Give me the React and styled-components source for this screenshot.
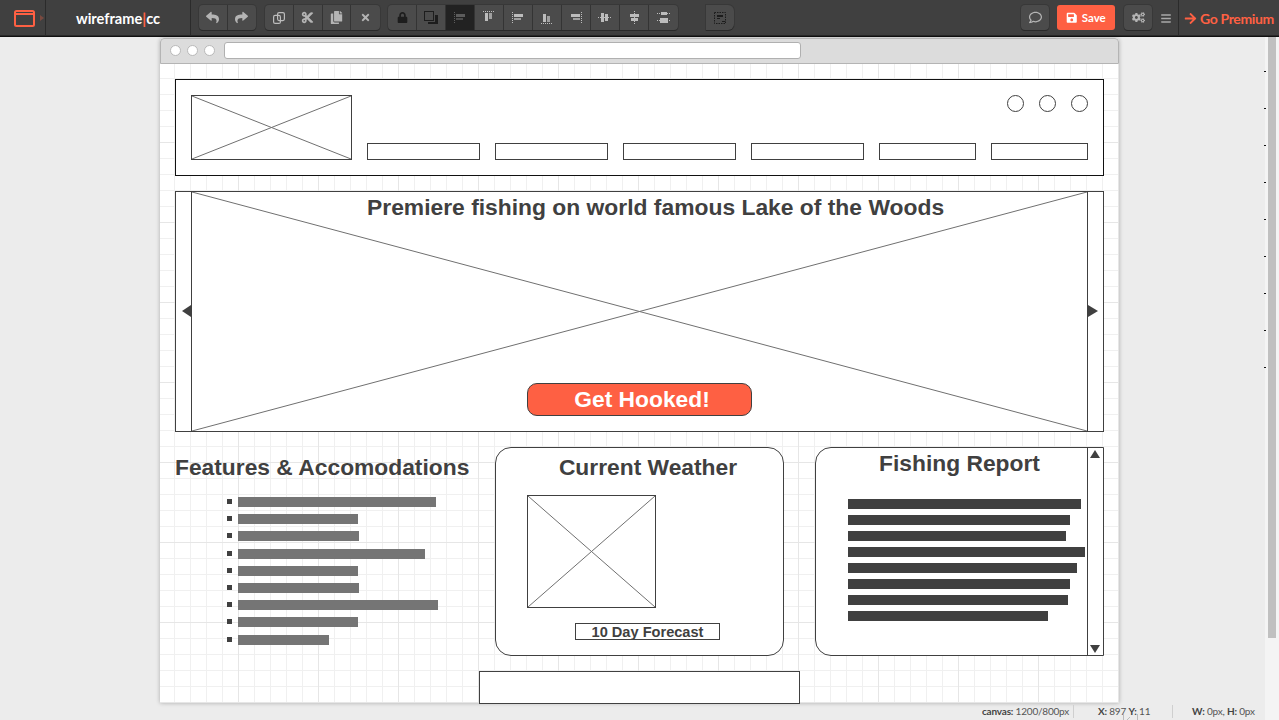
import React from "react";
import styled, { createGlobalStyle } from "styled-components";
import { FaReply, FaShare, FaCut, FaCopy, FaTimes, FaLock, FaRegComment, FaSave, FaCogs, FaBars, FaArrowRight } from "react-icons/fa";

const Global = createGlobalStyle`
  html, body { margin: 0; padding: 0; height: 100%; overflow: hidden; background: #ececec; }
  * { box-sizing: border-box; }
`;
const Page = styled.div`position: relative; width: 1279px; height: 720px; overflow: hidden; display: flex; flex-direction: column; font-family: Lato, sans-serif;`;

/* toolbar */
const Toolbar = styled.header`display: flex; align-items: flex-start; height: 37px; flex: none; background: #404040; border-bottom: 1px solid #111; box-shadow: inset 0 -1px 0 #2a2a2a;`;
const LogoCell = styled.div`width: 46px; height: 36px; border-right: 1px solid #2b2b2b; display: flex; align-items: center; padding-left: 14px; gap: 5px;`;
const BrandCell = styled.div`width: 145px; height: 36px; border-right: 1px solid #2b2b2b; display: flex; align-items: center; justify-content: center; color: #fff; font-weight: 700; font-size: 14.6px; letter-spacing: 0;`;
const BrandBar = styled.span`color: #fe6043; font-weight: 900;`;
const Group = styled.div`display: flex; height: 25px; margin-top: 5px; margin-left: ${p => p.$ml}px; border-radius: 4px; background: #4b4b4b; box-shadow: 0 1px 0 #2a2a2a, 0 0 0 1px #383838;`;
const ToolBtn = styled.div`width: ${p => p.$w || 29}px; height: 25px; display: flex; align-items: center; justify-content: center; color: #b4b4b4; font-size: 13px; background: ${p => p.$active ? "#222" : "transparent"}; border-right: 1px solid #343434; &:last-child { border-right: 0; }`;
const Solo = styled(Group)`border-radius: 0 6px 6px 0;`;
const ChipBtn = styled.div`width: 28px; height: 25px; margin-top: 5px; margin-left: ${p => p.$ml}px; display: flex; align-items: center; justify-content: center; border-radius: 4px; background: #4b4b4b; box-shadow: 0 1px 0 #2a2a2a, 0 0 0 1px #383838; color: #b4b4b4; font-size: 13px;`;
const SaveBtn = styled.div`width: 58px; height: 25px; margin-top: 5px; margin-left: 8px; display: flex; align-items: center; justify-content: center; gap: 4px; border-radius: 3px; background: #fe6043; color: #fff; font-weight: 700; font-size: 11.5px;`;
const MenuIcon = styled.div`margin-left: 9px; width: 10px; height: 36px; display: flex; align-items: center; color: #a8a8a8; font-size: 11px;`;
const Premium = styled.div`margin-left: 7px; height: 36px; padding-left: 5px; border-left: 1px solid #2b2b2b; display: flex; align-items: center; gap: 3px; color: #fe6043; font-weight: 700; font-size: 14px; white-space: nowrap; letter-spacing: -0.35px;`;

/* canvas */
const Workspace = styled.main`flex: 1; padding: 1px 0 0 160px;`;
const Browser = styled.div`width: 959px; height: 665px; background: #fff; box-shadow: 0 0 4px rgba(0,0,0,.28); border-radius: 4px 4px 0 0;`;
const Chrome = styled.div`height: 26px; display: flex; align-items: center; gap: 6px; padding: 0 0 1px 9px; background: #dcdcdc; border: 1px solid #b4b4b4; border-radius: 4px 4px 0 0;`;
const Dot = styled.span`width: 11px; height: 11px; border-radius: 50%; background: #fff; border: 1px solid #b9b9b9;`;
const Address = styled.div`width: 577px; height: 17px; margin-left: 3px; background: #fff; border: 1px solid #b0b0b0; border-radius: 3px;`;
const Sheet = styled.div`
  height: 639px; padding: 15px; display: flex; flex-direction: column; gap: 15px;
  background-color: #fff;
  background-image:
    linear-gradient(to right, #e6e6e6 1px, transparent 1px),
    linear-gradient(to bottom, #e6e6e6 1px, transparent 1px),
    linear-gradient(to right, #f0f0f0 1px, transparent 1px),
    linear-gradient(to bottom, #f0f0f0 1px, transparent 1px);
  background-size: 80px 80px, 80px 80px, 16px 16px, 16px 16px;
  background-position: 78px 78px, 78px 78px, 14px 14px, 14px 14px;
`;

/* wireframe parts */
const SiteHeader = styled.section`position: relative; width: 929px; height: 97px; flex: none; padding: 15px; display: flex; align-items: flex-end; gap: 15px; background: #fff; border: 1px solid #111;`;
const XBox = styled.div`position: relative; flex: none; width: ${p => p.$w}px; height: ${p => p.$h}px; margin-top: ${p => p.$mt || 0}px; border: 1px solid #404040; background: #fff; svg { position: absolute; inset: 0; display: block; width: 100%; height: 100%; }`;
const NavBox = styled.div`flex: none; width: ${p => p.$w}px; height: 17px; border: 1px solid #404040; background: #fff;`;
const Circles = styled.div`position: absolute; top: 15px; right: 15px; display: flex; gap: 15px;`;
const Circle = styled.span`width: 17px; height: 17px; border-radius: 50%; border: 1px solid #404040; background: #fff;`;

const Hero = styled.section`position: relative; width: 929px; height: 241px; flex: none; padding: 0 15px; background: #fff; border: 1px solid #404040; overflow: visible;`;
const HeroTitle = styled.h1`position: absolute; top: 0; left: 191px; margin: 0; font: 700 22.85px/30px "Liberation Sans", Arial, sans-serif; color: #404040; white-space: nowrap;`;
const HeroArrow = styled.svg`position: absolute; top: 113px; ${p => p.$side}: ${p => p.$off}px; width: ${p => p.$w}px; height: 12px; display: block;`;
const Cta = styled.div`position: absolute; left: 351px; bottom: 15px; width: 225px; height: 33px; padding-left: 5px; display: flex; align-items: center; justify-content: center; border: 1px solid #404040; border-radius: 10px; background: #fe6043; color: #fff; font: 700 22.8px/1 "Liberation Sans", Arial, sans-serif;`;

const Row = styled.section`display: grid; grid-template-columns: 289px 289px 289px; column-gap: 31px; width: 929px; height: 209px; flex: none;`;
const Column = styled.div`min-width: 0;`;
const SideTitle = styled.h2`margin: 0 0 18px; height: 32px; white-space: nowrap; font: 700 22.8px/40px "Liberation Sans", Arial, sans-serif; color: #404040;`;
const BulletList = styled.ul`list-style: none; margin: 0; padding: 0 0 0 52px; display: flex; flex-direction: column; gap: 7.2px;`;
const Bullet = styled.li`display: flex; align-items: flex-start; gap: 6px; height: 10px;`;
const Square = styled.span`width: 5px; height: 5px; margin-top: 2px; background: #404040;`;
const Bar = styled.span`display: block; height: 10px; width: ${p => p.$w}px; background: ${p => p.$c};`;

const WeatherCard = styled.div`border: 1px solid #404040; border-radius: 16px; background: #fff; height: 209px;`;
const CardTitle = styled.h2`margin: 0; height: 47px; padding-left: 17px; text-align: center; font: 700 22.8px/38px "Liberation Sans", Arial, sans-serif; color: #404040;`;
const WeatherBody = styled.div`padding-left: 31px;`;
const Forecast = styled.div`width: 145px; height: 17px; margin: 15px 0 0 48px; border: 1px solid #404040; text-align: center; font: 700 14.6px/17px "Liberation Sans", Arial, sans-serif; color: #404040; background: #fff; white-space: nowrap;`;

const ReportCard = styled.div`display: flex; height: 209px; border: 1px solid #404040; border-radius: 16px 0 0 16px; background: #fff;`;
const ReportMain = styled.div`flex: 1;`;
const ReportTitle = styled.h2`margin: 0; height: 51px; padding-left: 16px; text-align: center; font: 700 22.8px/30px "Liberation Sans", Arial, sans-serif; color: #404040;`;
const ReportLines = styled.div`padding-left: 32px; display: flex; flex-direction: column; gap: 6px;`;
const ScrollRail = styled.div`width: 16px; flex: none; border-left: 1px solid #404040; display: flex; flex-direction: column; justify-content: space-between; align-items: center; padding: 2px 1px 2px 0;`;
const Footer = styled.div`width: 321px; height: 33px; margin-left: 304px; flex: none; background: #fff; border: 1px solid #404040;`;

/* status */
const Status = styled.footer`position: absolute; left: 0; right: 0; bottom: 0; height: 17px; display: flex; align-items: center; font-size: 10px; letter-spacing: -0.2px; color: #555; white-space: nowrap; b { font-weight: 700; color: #444; }`;
const StatusItem = styled.div`position: relative; height: 13px; line-height: 13px; margin-left: ${p => p.$ml}px; width: ${p => p.$w}px; border-right: ${p => p.$div ? "1px solid #cfcfcf" : "0"};`;
const Handle = styled.svg`position: absolute; left: 1123px; bottom: 0; width: 15px; height: 6px; display: block;`;

/* scrollbar + ruler */
const ScrollTrack = styled.div`position: absolute; top: 37px; bottom: 0; right: 0; width: 14px; background: #f4f4f4; padding: 0 3px;`;
const ScrollThumb = styled.div`width: 8px; height: 601px; background: #c0c0c0;`;
const Tick = styled.i`position: absolute; left: 1264px; width: 2px; height: 1px; background: #111; top: ${p => p.$y}px;`;

const Cross = () => (
  <svg preserveAspectRatio="none" viewBox="0 0 100 100">
    <path d="M0 0L100 100M100 0L0 100" stroke="#707070" strokeWidth="1" vectorEffect="non-scaling-stroke" fill="none" />
  </svg>
);

const Align = ({ kind, dim }) => {
  const c = dim ? "#5c5c5c" : "#bcbcbc";
  const d = { stroke: c, strokeDasharray: "1 1", strokeWidth: 1 };
  const m = {
    top: [<line key="l" x1="2" y1="1.5" x2="14" y2="1.5" {...d} />, <rect key="a" x="4" y="3" width="3" height="8" fill={c} />, <rect key="b" x="8" y="3" width="3" height="6" fill={c} opacity=".75" />],
    left: [<line key="l" x1="2.5" y1="2" x2="2.5" y2="14" {...d} />, <rect key="a" x="4" y="4" width="9" height="3" fill={c} />, <rect key="b" x="4" y="8" width="7" height="2" fill={c} opacity=".75" />],
    bottom: [<line key="l" x1="2" y1="13.5" x2="14" y2="13.5" {...d} />, <rect key="a" x="4" y="4" width="3" height="8" fill={c} />, <rect key="b" x="8" y="6" width="3" height="6" fill={c} opacity=".75" />],
    right: [<line key="l" x1="13.5" y1="2" x2="13.5" y2="14" {...d} />, <rect key="a" x="3" y="4" width="9" height="3" fill={c} />, <rect key="b" x="5" y="8" width="7" height="2" fill={c} opacity=".75" />],
    midh: [<line key="l" x1="1" y1="7.5" x2="15" y2="7.5" {...d} />, <rect key="a" x="4" y="3" width="3" height="9" fill={c} />, <rect key="b" x="8" y="4" width="3" height="7" fill={c} />],
    midv: [<line key="l" x1="8.5" y1="1" x2="8.5" y2="14" {...d} />, <rect key="a" x="4" y="4" width="9" height="3" fill={c} />, <rect key="b" x="5" y="8" width="7" height="3" fill={c} />],
    dist: [<line key="l" x1="1" y1="3.5" x2="15" y2="3.5" {...d} />, <line key="m" x1="1" y1="10.5" x2="15" y2="10.5" {...d} />, <rect key="a" x="5" y="2" width="6" height="3" fill={c} />, <rect key="b" x="4" y="8" width="8" height="5" fill={c} />],
  }[kind];
  return <svg width="16" height="15" viewBox="0 0 16 15">{m}</svg>;
};

const Duplicate = () => (
  <svg width="12" height="12" viewBox="0 0 12 12" fill="none" stroke="#bcbcbc" strokeWidth="1.2">
    <rect x="4.6" y="0.6" width="6.8" height="8" rx="1.5" />
    <rect x="0.6" y="3.4" width="6.8" height="8" rx="1.5" />
  </svg>
);
const Layers = () => (
  <svg width="15" height="14" viewBox="0 0 15 14">
    <rect x="0.5" y="0.5" width="9" height="9" fill="none" stroke="#1d1d1d" />
    <path d="M11 4h3v9H4v-2h7z" fill="#1d1d1d" />
  </svg>
);
const Ungroup = () => (
  <svg width="14" height="14" viewBox="0 0 14 14">
    <rect x="1.5" y="1.5" width="11" height="11" fill="none" stroke="#1c1c1c" strokeDasharray="1.5 1" />
    <rect x="4" y="4" width="6" height="2" fill="#1c1c1c" /><rect x="4" y="7" width="3" height="1" fill="#1c1c1c" /><rect x="9" y="10" width="3" height="1" fill="#1c1c1c" />
  </svg>
);

const featureBars = [198, 120, 121, 187, 120, 121, 200, 120, 91];
const reportBars = [233, 222, 218, 237, 229, 222, 220, 200];
const navBoxes = [113, 113, 113, 113, 97, 97];
const ticks = [71, 108, 145, 182, 219, 256, 293, 330, 367];

export default function App() {
  return (
    <Page>
      <Global />
      <Toolbar>
        <LogoCell>
          <svg width="21" height="17" viewBox="0 0 21 17"><rect x="1" y="1" width="19" height="15" rx="1.5" fill="none" stroke="#fe6043" strokeWidth="2" /><rect x="1" y="3" width="19" height="2" fill="#fe6043" /></svg>
          <svg width="4" height="6" viewBox="0 0 4 6"><path d="M0 0l4 3-4 3z" fill="#7a4a40" /></svg>
        </LogoCell>
        <BrandCell>wireframe<BrandBar>|</BrandBar>cc</BrandCell>
        <Group $ml={8}>
          <ToolBtn $w={28.5}><FaReply /></ToolBtn>
          <ToolBtn $w={28.5}><FaShare /></ToolBtn>
        </Group>
        <Group $ml={9}>
          <ToolBtn $w={28.75}><Duplicate /></ToolBtn>
          <ToolBtn $w={28.75}><FaCut /></ToolBtn>
          <ToolBtn $w={28.75}><FaCopy /></ToolBtn>
          <ToolBtn $w={28.75}><FaTimes style={{ fontSize: 11 }} /></ToolBtn>
        </Group>
        <Group $ml={8}>
          <ToolBtn><FaLock style={{ fontSize: 11, color: "#1d1d1d" }} /></ToolBtn>
          <ToolBtn><Layers /></ToolBtn>
          <ToolBtn $active><Align kind="left" dim /></ToolBtn>
          <ToolBtn><Align kind="top" /></ToolBtn>
          <ToolBtn><Align kind="left" /></ToolBtn>
          <ToolBtn><Align kind="bottom" /></ToolBtn>
          <ToolBtn><Align kind="right" /></ToolBtn>
          <ToolBtn><Align kind="midh" /></ToolBtn>
          <ToolBtn><Align kind="midv" /></ToolBtn>
          <ToolBtn><Align kind="dist" /></ToolBtn>
        </Group>
        <Solo $ml={28}>
          <ToolBtn $w={28}><Ungroup /></ToolBtn>
        </Solo>
        <ChipBtn $ml={287}><FaRegComment /></ChipBtn>
        <SaveBtn><FaSave />Save</SaveBtn>
        <ChipBtn $ml={9}><FaCogs /></ChipBtn>
        <MenuIcon><FaBars /></MenuIcon>
        <Premium><FaArrowRight style={{ fontSize: 13 }} />Go Premium</Premium>
      </Toolbar>

      <Workspace>
        <Browser>
          <Chrome>
            <Dot /><Dot /><Dot />
            <Address />
          </Chrome>
          <Sheet>
            <SiteHeader>
              <XBox $w={161} $h={65}><Cross /></XBox>
              {navBoxes.map((w, i) => <NavBox key={i} $w={w} />)}
              <Circles><Circle /><Circle /><Circle /></Circles>
            </SiteHeader>
            <Hero>
              <XBox $w={897} $h={241} $mt={-1}><Cross /></XBox>
              <HeroTitle>Premiere fishing on world famous Lake of the Woods</HeroTitle>
              <HeroArrow $side="left" $off={6} $w={9} viewBox="0 0 9 12"><path d="M9 0v12L0 6z" fill="#404040" /></HeroArrow>
              <HeroArrow $side="right" $off={5} $w={10} viewBox="0 0 10 12"><path d="M0 0v12l10-6z" fill="#404040" /></HeroArrow>
              <Cta>Get Hooked!</Cta>
            </Hero>
            <Row>
              <Column>
                <SideTitle>Features &amp; Accomodations</SideTitle>
                <BulletList>
                  {featureBars.map((w, i) => (
                    <Bullet key={i}><Square /><Bar $w={w} $c="#757575" /></Bullet>
                  ))}
                </BulletList>
              </Column>
              <WeatherCard>
                <CardTitle>Current Weather</CardTitle>
                <WeatherBody>
                  <XBox $w={129} $h={113}><Cross /></XBox>
                  <Forecast>10 Day Forecast</Forecast>
                </WeatherBody>
              </WeatherCard>
              <ReportCard>
                <ReportMain>
                  <ReportTitle>Fishing Report</ReportTitle>
                  <ReportLines>
                    {reportBars.map((w, i) => <Bar key={i} $w={w} $c="#404040" />)}
                  </ReportLines>
                </ReportMain>
                <ScrollRail>
                  <svg width="10" height="8" viewBox="0 0 10 8"><path d="M5 0l5 8H0z" fill="#404040" /></svg>
                  <svg width="10" height="8" viewBox="0 0 10 8"><path d="M0 0h10L5 8z" fill="#404040" /></svg>
                </ScrollRail>
              </ReportCard>
            </Row>
            <Footer />
          </Sheet>
        </Browser>
      </Workspace>

      <Status>
        <StatusItem $ml={982} $w={92} $div><b>canvas:</b> 1200/800px</StatusItem>
        <StatusItem $ml={24} $w={74} $div={false}><b>X:</b> 897 <b>Y:</b> 11</StatusItem>
        <StatusItem $ml={0} $w={1} $div />
        <StatusItem $ml={19} $w={70}><b>W:</b> 0px, <b>H:</b> 0px</StatusItem>
        <Handle viewBox="0 0 15 6"><path d="M0.5 0v6M14.5 0v6M4 6l3-3" stroke="#bbb" fill="none" /></Handle>
      </Status>

      <ScrollTrack><ScrollThumb /></ScrollTrack>
      {ticks.map(y => <Tick key={y} $y={y} />)}
    </Page>
  );
}
